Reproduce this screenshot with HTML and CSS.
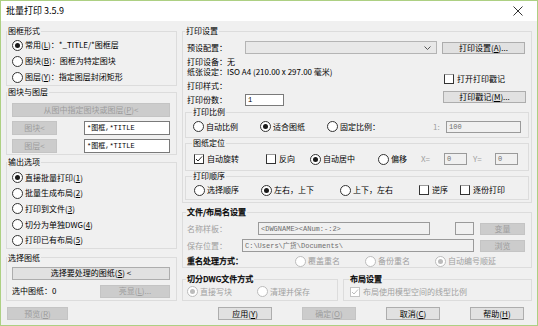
FILE: index.html
```html
<!DOCTYPE html>
<html>
<head>
  <meta charset="utf-8">
  <title>批量打印</title>
  <link rel="stylesheet" href="styles.css">
</head>
<body>
<div class="window">
  <div class="titlebar">
    <span class="title">批量打印 3.5.9</span>
    <svg class="close" width="10" height="10" viewBox="0 0 10 10"><path d="M0.5 0.5L9.5 9.5M9.5 0.5L0.5 9.5"/></svg>
  </div>

  <div class="main">
    <div class="col-left">
      <fieldset class="group g-frame">
        <legend>图框形式</legend>
        <div class="gbody">
          <div class="opt row16"><span class="radio on"></span>常用(<u>L</u>)：*_TITLE/*图框层</div>
          <div class="opt row16"><span class="radio"></span>图块(<u>B</u>)：图框为特定图块</div>
          <div class="opt row16"><span class="radio"></span>图层(<u>Y</u>)：指定图层封闭矩形</div>
        </div>
      </fieldset>

      <fieldset class="group g-block">
        <legend>图块与图层</legend>
        <div class="gbody">
          <div class="btn off btn-full">从图中指定图块或图层(<u>P</u>)&lt;</div>
          <div class="pick-row">
            <div class="btn off btn-pick">图块&lt;</div>
            <div class="field">*图框,*TITLE</div>
          </div>
          <div class="pick-row">
            <div class="btn off btn-pick">图层&lt;</div>
            <div class="field">*图框,*TITLE</div>
          </div>
        </div>
      </fieldset>

      <fieldset class="group g-output">
        <legend>输出选项</legend>
        <div class="gbody">
          <div class="opt row-out"><span class="radio on"></span>直接批量打印(<u>1</u>)</div>
          <div class="opt row-out"><span class="radio"></span>批量生成布局(<u>2</u>)</div>
          <div class="opt row-out"><span class="radio"></span>打印到文件(<u>3</u>)</div>
          <div class="opt row-out"><span class="radio"></span>切分为单独DWG(<u>4</u>)</div>
          <div class="opt row-out"><span class="radio"></span>打印已有布局(<u>5</u>)</div>
        </div>
      </fieldset>

      <fieldset class="group g-sheet">
        <legend>选择图纸</legend>
        <div class="gbody">
          <div class="btn btn-full">选择要处理的图纸(<u>S</u>) &lt;</div>
          <div class="sheet-row">
            <span>选中图纸：0</span>
            <div class="btn off btn-light">亮显(<u>L</u>)...</div>
          </div>
        </div>
      </fieldset>
    </div>

    <div class="col-right">
      <fieldset class="group g-print">
        <legend>打印设置</legend>
        <div class="gbody">
          <div class="preset-row">
            <span class="lbl58">预设配置：</span>
            <div class="combo">
              <svg width="7" height="4" viewBox="0 0 7 4"><path d="M0.5 0.5L3.5 3.5L6.5 0.5"/></svg>
            </div>
            <div class="btn btn-side">打印设置(<u>A</u>)...</div>
          </div>
          <div class="info">
            <div class="info-left">
              <div class="line first">打印设备：无</div>
              <div class="line">纸张设定：ISO A4 (210.00 x 297.00 毫米)</div>
              <div class="line style">打印样式：</div>
              <div class="copies">
                <span class="lbl58">打印份数：</span>
                <div class="field copies-field">1</div>
              </div>
            </div>
            <div class="info-right">
              <div class="opt stamp-check"><span class="check"></span>打开打印戳记</div>
              <div class="btn btn-side">打印戳记(<u>M</u>)...</div>
            </div>
          </div>

          <fieldset class="group sub sub-scale">
            <legend>打印比例</legend>
            <div class="gbody">
              <div class="row-scale">
                <div class="opt"><span class="radio"></span>自动比例</div>
                <div class="opt"><span class="radio on"></span>适合图纸</div>
                <div class="opt"><span class="radio"></span>固定比例：</div>
                <span class="dim">1:</span>
                <div class="field off">100</div>
              </div>
            </div>
          </fieldset>

          <fieldset class="group sub sub-place">
            <legend>图纸定位</legend>
            <div class="gbody">
              <div class="row-place">
                <div class="opt"><span class="check on"><svg width="8" height="8" viewBox="0 0 8 8"><path d="M1 4L3 6L7 1.5"/></svg></span>自动旋转</div>
                <div class="opt"><span class="check"></span>反向</div>
                <div class="opt"><span class="radio on"></span>自动居中</div>
                <div class="opt"><span class="radio"></span>偏移</div>
                <span class="dim">X=</span>
                <div class="field off">0</div>
                <span></span>
                <span class="dim">Y=</span>
                <div class="field off">0</div>
              </div>
            </div>
          </fieldset>

          <fieldset class="group sub sub-order">
            <legend>打印顺序</legend>
            <div class="gbody">
              <div class="row-order">
                <div class="opt"><span class="radio"></span>选择顺序</div>
                <div class="opt"><span class="radio on"></span>左右，上下</div>
                <div class="opt"><span class="radio"></span>上下，左右</div>
                <div class="opt"><span class="check"></span>逆序</div>
                <div class="opt"><span class="check"></span>逐份打印</div>
              </div>
            </div>
          </fieldset>
        </div>
      </fieldset>

      <fieldset class="group g-file">
        <legend class="strong">文件/布局名设置</legend>
        <div class="gbody">
          <div class="file-row">
            <span class="dim lbl71">名称样板：</span>
            <div class="field off name-field">&lt;DWGNAME&gt;&lt;ANum:-:2&gt;</div>
            <div class="field off tiny-field"></div>
            <div class="btn off btn-small">变量</div>
          </div>
          <div class="file-row">
            <span class="dim lbl55">保存位置：</span>
            <div class="field off path-field">C:\Users\广货\Documents\</div>
            <div class="btn off btn-small">浏览</div>
          </div>
          <div class="dup-row">
            <span class="strong lbl108">重名处理方式：</span>
            <div class="opt dim w70"><span class="radio off"></span>覆盖重名</div>
            <div class="opt dim w70"><span class="radio off"></span>备份重名</div>
            <div class="opt dim"><span class="radio off on"></span>自动编号顺延</div>
          </div>
        </div>
      </fieldset>

      <div class="pair">
        <fieldset class="group g-split">
          <legend class="strong">切分DWG文件方式</legend>
          <div class="gbody">
            <div class="opt-row">
              <div class="opt dim w70"><span class="radio off on"></span>直接写块</div>
              <div class="opt dim"><span class="radio off"></span>清理并保存</div>
            </div>
          </div>
        </fieldset>
        <fieldset class="group g-layout">
          <legend class="strong">布局设置</legend>
          <div class="gbody">
            <div class="opt-row">
              <div class="opt dim"><span class="check off on"><svg width="8" height="8" viewBox="0 0 8 8"><path d="M1 4L3 6L7 1.5"/></svg></span>布局使用模型空间的线型比例</div>
            </div>
          </div>
        </fieldset>
      </div>
    </div>
  </div>

  <div class="footer">
    <div class="btn off btn-preview">预览(<u>R</u>)</div>
    <div class="actions">
      <div class="btn btn-act">应用(<u>Y</u>)</div>
      <div class="btn off btn-act">确定(<u>O</u>)</div>
      <div class="btn btn-act">取消(<u>C</u>)</div>
      <div class="btn btn-act">帮助(<u>H</u>)</div>
    </div>
  </div>
</div>
</body>
</html>
```

FILE: styles.css
```css
* {
  box-sizing: border-box;
}

body {
  margin: 0;
  font-family: "Noto Sans CJK SC", sans-serif;
  font-size: 8px;
  line-height: 10px;
  color: #000;
  background: #fff;
}

u {
  text-underline-offset: 1px;
}

.window {
  width: 538px;
  height: 326px;
  border: 1px solid #add083;
  background: #f0f0f0;
}

.titlebar {
  height: 20px;
  background: #fff;
  display: flex;
  align-items: center;
  justify-content: space-between;
  padding: 0 14px 0 5px;
}

.title {
  font-size: 9px;
}

.close {
  stroke: #333;
  stroke-width: 1;
  fill: none;
}

.main {
  display: grid;
  grid-template-columns: 171px 350px;
  column-gap: 5px;
  padding: 5px 0 0 5px;
}

/* group boxes */
.group {
  margin: 0;
  padding: 0;
  min-width: 0;
  border: 1px solid #dcdcdc;
}

.group legend {
  padding: 0 1px;
  line-height: 10px;
}

.strong {
  font-weight: 500;
  color: #000;
  -webkit-text-stroke: 0.25px #000;
}

.dim {
  color: #a0a0a0;
}

/* controls */
.opt {
  display: flex;
  align-items: center;
  white-space: nowrap;
}

.radio {
  width: 11px;
  height: 11px;
  flex: none;
  border: 1px solid #333;
  border-radius: 50%;
  background: #fff;
  margin-right: 2px;
  display: flex;
  align-items: center;
  justify-content: center;
}

.radio.on::after {
  content: "";
  width: 5px;
  height: 5px;
  border-radius: 50%;
  background: #1a1a1a;
}

.radio.off {
  border-color: #bcbcbc;
}

.radio.off.on::after {
  background: #bcbcbc;
}

.check {
  width: 10px;
  height: 10px;
  flex: none;
  border: 1px solid #333;
  border-top-color: #9a9a9a;
  background: #fff;
  margin-right: 3px;
  display: flex;
  align-items: center;
  justify-content: center;
}

.check svg {
  fill: none;
  stroke: #222;
  stroke-width: 1;
}

.check.off {
  border-color: #c4c4c4;
}

.check.off svg {
  stroke: #bcbcbc;
}

.btn {
  height: 13px;
  display: flex;
  align-items: center;
  justify-content: center;
  background: #e1e1e1;
  border: 1px solid #adadad;
  white-space: nowrap;
}

.btn.off {
  background: #cccccc;
  border-color: #c4c4c4;
  color: #9c9c9c;
}

.field {
  height: 14px;
  background: #fff;
  border: 1px solid #7a7a7a;
  padding-left: 2px;
  display: flex;
  align-items: center;
  white-space: nowrap;
  overflow: hidden;
  font-family: "Liberation Mono", "Noto Sans CJK SC", monospace;
  font-size: 7px;
}

.field.off {
  background: #f0f0f0;
  border-color: #9a9a9a;
  color: #6d6d6d;
}

/* left column */
.g-frame .gbody {
  padding: 1px 5px 0 5px;
}

.row16 {
  height: 16px;
}

.g-block {
  margin-top: 1px;
}

.g-block .gbody {
  padding: 6px 5px 1px 5px;
}

.btn-full {
  height: 14px;
  width: 158px;
}

.pick-row {
  display: flex;
  justify-content: space-between;
  margin-top: 4px;
  width: 158px;
}

.btn-pick {
  width: 45px;
  height: 14px;
}

.pick-row .field {
  width: 86px;
}

.g-output {
  margin-top: 2px;
}

.g-output .gbody {
  padding: 3px 5px 0 5px;
}

.row-out {
  height: 15.6px;
}

.g-sheet {
  margin-top: 4px;
}

.g-sheet .gbody {
  padding: 4px 5px 2px 5px;
}

.g-sheet .btn-full {
  height: 13px;
}

.sheet-row {
  display: flex;
  justify-content: space-between;
  align-items: center;
  margin-top: 5px;
  width: 158px;
  height: 13px;
}

.btn-light {
  width: 70px;
}

/* right column */
.g-print legend {
  margin-left: 2px;
}

.g-print > .gbody {
  padding: 5px 2px 2px 2px;
}

.preset-row {
  display: flex;
  align-items: center;
  height: 13px;
  padding: 0 3px 0 2px;
}

.lbl58 {
  width: 58px;
  flex: none;
}

.combo {
  width: 192px;
  height: 13px;
  background: #e8e8e8;
  border: 1px solid #b4b4b4;
  display: flex;
  align-items: center;
  justify-content: flex-end;
  padding-right: 5px;
}

.combo svg {
  fill: none;
  stroke: #555;
}

.btn-side {
  width: 83px;
  height: 12px;
  margin-left: 5px;
}

.info {
  display: flex;
  justify-content: space-between;
  height: 52px;
  padding: 0 3px 0 2px;
}

.info-left .line {
  height: 10px;
  white-space: nowrap;
}

.info-left .first {
  margin-top: 3px;
}

.info-left .style {
  margin-top: 4px;
}

.copies {
  display: flex;
  align-items: center;
  margin-top: 3px;
  height: 12px;
}

.copies-field {
  width: 39px;
  height: 12px;
}

.info-right {
  width: 83px;
}

.stamp-check {
  height: 10px;
  margin-top: 20px;
  margin-left: 1px;
}

.info-right .btn-side {
  margin: 7px 0 0 0;
}

.sub legend {
  margin-left: 6px;
}

.sub-scale {
  margin-top: 1px;
}

.sub-scale .gbody {
  padding: 2px 7px 3px 7px;
}

.row-scale {
  display: grid;
  grid-template-columns: 67px 67px 1fr 13px 75px;
  align-items: center;
  height: 15px;
}

.row-scale .field {
  height: 12px;
}

.sub-place .gbody {
  padding: 4px 7px 4px 8px;
}

.row-place {
  display: grid;
  grid-template-columns: 72px 44px 68px 43px 23px 23px 6px 22px 23px;
  align-items: center;
  height: 14px;
}

.row-place .field {
  height: 12px;
}

.sub-order .gbody {
  padding: 2px 7px 2px 8px;
}

.row-order {
  display: grid;
  grid-template-columns: 67px 79px 79px 41px 1fr;
  align-items: center;
  height: 14px;
}

.g-file {
  margin-top: 4px;
}

.g-file legend,
.g-split legend {
  margin-left: 3px;
}

.g-file .gbody {
  padding: 5px 5px 0 4px;
}

.file-row {
  display: flex;
  align-items: center;
  height: 13px;
}

.file-row + .file-row {
  margin-top: 4px;
}

.file-row .field {
  height: 13px;
}

.lbl71 {
  width: 71px;
}

.lbl55 {
  width: 55px;
}

.lbl108 {
  width: 108px;
}

.name-field {
  width: 172px;
}

.tiny-field {
  width: 19px;
  margin-left: 25px;
}

.path-field {
  width: 232px;
}

.btn-small {
  width: 45px;
  height: 12px;
  margin-left: 6px;
}

.dup-row {
  display: flex;
  align-items: center;
  height: 12px;
  margin-top: 3px;
}

.w70 {
  width: 70px;
}

.pair {
  display: grid;
  grid-template-columns: 156px 189px;
  column-gap: 5px;
  margin-top: 6px;
}

.g-split .gbody {
  padding: 1px 4px 2px 4px;
}

.g-layout legend {
  margin-left: 5px;
}

.g-layout .gbody {
  padding: 1px 4px 2px 6px;
}

.opt-row {
  display: flex;
  align-items: center;
  height: 13px;
}

/* footer */
.footer {
  display: flex;
  margin-top: 6px;
  padding-left: 6px;
}

.btn-preview {
  width: 61px;
}

.actions {
  display: flex;
  gap: 30px;
  margin-left: 150px;
}

.btn-act {
  width: 54px;
}
```
